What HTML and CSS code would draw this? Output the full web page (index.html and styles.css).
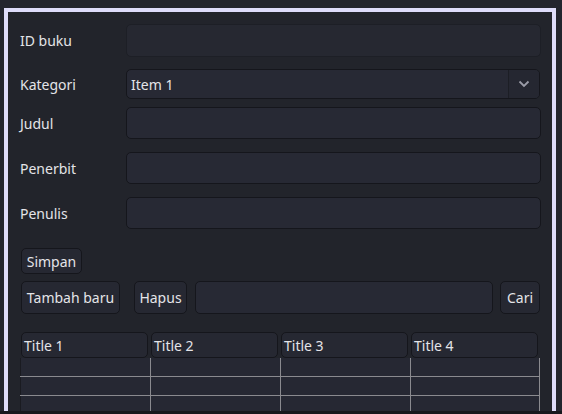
FILE: index.html
```html
<!DOCTYPE html>
<html>
<head>
<meta charset="utf-8">
<link rel="stylesheet" href="styles.css">
</head>
<body>
<div class="viewport">
  <div class="frame">
    <div class="form">
      <div class="row r-id">
        <label class="lbl">ID buku</label>
        <div class="input input-ro"></div>
      </div>
      <div class="row r-kat">
        <label class="lbl">Kategori</label>
        <div class="combo">
          <span class="combo-text">Item 1</span>
          <span class="combo-btn">
            <svg width="12" height="8" viewBox="0 0 12 8"><path d="M1.5 1.5 L6 6 L10.5 1.5" fill="none" stroke="#9b9ca8" stroke-width="1.8"/></svg>
          </span>
        </div>
      </div>
      <div class="row r-judul">
        <label class="lbl">Judul</label>
        <div class="input"></div>
      </div>
      <div class="row r-pen">
        <label class="lbl">Penerbit</label>
        <div class="input"></div>
      </div>
      <div class="row r-pen">
        <label class="lbl">Penulis</label>
        <div class="input"></div>
      </div>
    </div>
    <div class="actions">
      <button class="btn btn-simpan">Simpan</button>
      <div class="toolbar">
        <button class="btn btn-tall btn-tambah">Tambah baru</button>
        <button class="btn btn-tall btn-hapus">Hapus</button>
        <div class="input search"></div>
        <button class="btn btn-tall btn-cari">Cari</button>
      </div>
    </div>
    <div class="table">
      <div class="thead">
        <div class="th">Title 1</div>
        <div class="th">Title 2</div>
        <div class="th">Title 3</div>
        <div class="th">Title 4</div>
      </div>
      <div class="tbody">
        <div class="tr"><div class="td"></div><div class="td"></div><div class="td"></div><div class="td"></div></div>
        <div class="tr"><div class="td"></div><div class="td"></div><div class="td"></div><div class="td"></div></div>
        <div class="tr"><div class="td"></div><div class="td"></div><div class="td"></div><div class="td"></div></div>
      </div>
    </div>
  </div>
</div>
<div class="bottom-strip"></div>
</body>
</html>
```

FILE: styles.css
```css
* { box-sizing: border-box; }
html, body {
  margin: 0;
  padding: 0;
  background: #23252e;
  width: 562px;
  height: 414px;
  overflow: hidden;
  font-family: "Noto Sans", "DejaVu Sans", sans-serif;
  font-size: 14px;
  color: #e4e4e8;
}
.viewport {
  height: 411px;
  overflow: hidden;
  padding: 8px 6px 0 4px;
}
.frame {
  height: 420px;
  border: 4px solid #dedcfa;
  border-bottom: none;
  background: #22242b;
  padding: 12px 11px 0 12px;
}
.form {
  display: flex;
  flex-direction: column;
}
.row {
  display: flex;
  align-items: center;
}
.lbl {
  width: 106px;
  flex: none;
}
.input {
  flex: 1;
  height: 32px;
  background: #272934;
  border: 1px solid #15161c;
  border-radius: 5px;
}
.input-ro {
  height: 33px;
  background: #262831;
  border-color: #1d1f26;
}
.r-kat { margin-top: 12px; }
.r-judul { margin-top: 8px; }
.r-pen { margin-top: 13px; }
.combo {
  flex: 1;
  height: 30px;
  margin-right: 1px;
  display: flex;
  align-items: center;
  background: #272934;
  border: 1px solid #15161c;
  border-radius: 5px;
  overflow: hidden;
}
.combo-text {
  flex: 1;
  padding-left: 4px;
}
.combo-btn {
  width: 31px;
  height: 100%;
  border-left: 1px solid #1c1e25;
  background: #252731;
  display: flex;
  align-items: center;
  justify-content: center;
}
.actions {
  margin-top: 19px;
  display: flex;
  flex-direction: column;
  align-items: flex-start;
  gap: 7px;
}
.btn {
  font: inherit;
  color: #e4e4e8;
  background: #262832;
  border: 1px solid #15161c;
  border-radius: 5px;
  padding: 0;
  height: 26px;
  margin: 0;
  white-space: nowrap;
  text-align: center;
}
.btn-simpan { margin-left: 1px; width: 61px; }
.toolbar {
  display: flex;
  align-items: center;
  width: 100%;
}
.btn-tall { height: 33px; }
.btn-tambah { margin-left: 1px; width: 99px; flex: none; }
.btn-hapus { margin-left: 14px; width: 53px; flex: none; }
.search { margin-left: 8px; height: 33px; }
.btn-cari { margin-left: 7px; width: 40px; margin-right: 1px; flex: none; }
.table {
  margin-top: 18px;
  width: 520px;
}
.thead {
  display: grid;
  grid-template-columns: repeat(4, 130px);
  height: 26px;
}
.th {
  margin: 0 2px 0 1px;
  background: #262832;
  border: 1px solid #15161c;
  border-radius: 5px;
  padding-left: 2px;
  display: flex;
  align-items: center;
}
.tbody {
  background: #262833;
  border-right: 1px solid #8a8a8f;
}
.tr {
  display: grid;
  grid-template-columns: repeat(4, 130px);
  height: 19px;
  border-bottom: 1px solid #8a8a8f;
}
.td { border-left: 1px solid #8a8a8f; }
.td:first-child { border-left-color: #1a1b21; }
.bottom-strip {
  height: 3px;
  background: #17181d;
}
```
